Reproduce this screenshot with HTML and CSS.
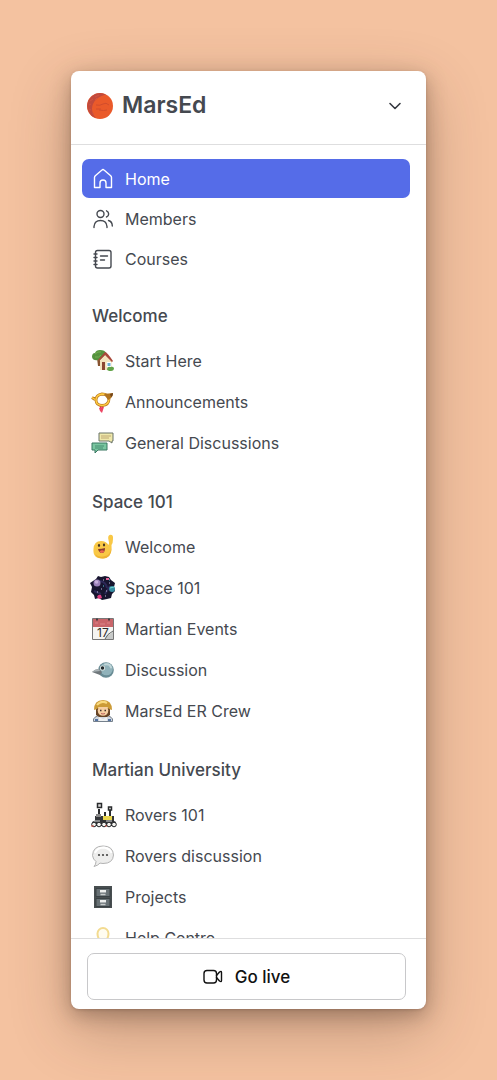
FILE: index.html
```html
<!DOCTYPE html>
<html lang="en">
<head>
    <meta charset="UTF-8">
    <meta name="viewport" content="width=device-width, initial-scale=1.0">
    <title>MarsEd</title>
    <link rel="stylesheet" href="styles.css">
</head>
<body>

<aside class="sidebar">
    <header class="sidebar-header">
        <svg class="logo" viewBox="0 0 26 26" aria-hidden="true">
            <circle cx="13" cy="13" r="13" fill="#ea5a2a"/>
            <path d="M13 0A13 13 0 0 0 9 25.300Q3 18 6 11T19 1.500Q16 0 13 0z" fill="#c24a3c"/>
            <path d="M3 8l3-2M2 12l2-1M8 4l4-2M2 16l2 1M8 7l2-2M5 20l2 1" stroke="#d2533f" stroke-width="1" fill="none"/>
            <path d="M9 12q4 1 7-1t6 1M9 16h5M12 17q5 1 8 0" stroke="#d24d2c" stroke-width="1" fill="none"/>
        </svg>
        <h1>MarsEd</h1>
        <button class="menu-btn" aria-label="Switch community">
            <svg class="chevron" viewBox="0 0 14 14"><path d="M2 4.500l5 5 5-5"/></svg>
        </button>
    </header>

    <nav class="nav">
        <div class="main-links">
            <a class="nav-link active" href="#">
                <svg class="icon line" viewBox="0 0 22 22"><path d="M2.500 9.500Q2.500 8.500 3.300 7.700L9.700 2.200Q11 1 12.300 2.200L18.700 7.700Q19.500 8.500 19.500 9.500V19.500H14V15Q14 12 11 12T8 15V19.500H2.500z"/></svg>
                Home
            </a>
            <a class="nav-link" href="#">
                <svg class="icon line" viewBox="0 0 22 22"><circle cx="8.500" cy="6" r="3.500"/><path d="M2 19.500V18.500Q2.500 12.500 8.500 12.500T15 18.500V19.500M14.500 2.800A3.300 3.300 0 0 1 14.500 9M16.500 12.500Q20.300 13.500 20.300 18"/></svg>
                Members
            </a>
            <a class="nav-link" href="#">
                <svg class="icon line" viewBox="0 0 22 22"><rect x="3.500" y="2.500" width="15.500" height="17.500" rx="2"/><path d="M8.500 8h7M8.500 12h4M2 6h3M2 9.500h3M2 13h3M2 16.500h3"/></svg>
                Courses
            </a>
        </div>

        <section class="group">
            <h2>Welcome</h2>
            <div class="group-links">
                <a class="nav-link" href="#">
                    <svg class="icon" viewBox="0 0 22 22">
                        <path d="M5 8h3v8H6z" fill="#875331"/>
                        <path d="M0 7Q0 3 3 3 4 0 8 0q5 0 6 3 2 4-2 5-3 4-6 2-5 1-6-3z" fill="#55933e"/>
                        <path d="M3 4q3-3 6-2M3 7q4 1 6-2" stroke="#75ae51" fill="none"/>
                        <path d="M8 10l6-6 6 7v9H8z" fill="#f4e3bd"/>
                        <path d="M6 10l7-8q2 0 8 9l-1 1-7-7-6 6z" fill="#a9483a"/>
                        <path d="M10 12h3v8h-3z" fill="#8c4631"/>
                        <path d="M15 12.500h4v4h-4z" fill="#6dadd0" stroke="#fff"/>
                        <path d="M15 19q1-3 3-2 3-1 4 1 0 3-3 3-4 0-4-2z" fill="#62a348"/>
                    </svg>
                    Start Here
                </a>
                <a class="nav-link" href="#">
                    <svg class="icon" viewBox="0 0 22 22" fill="none">
                        <path d="M8 13l1 6M11 13l-1 6" stroke="#e52b50" stroke-width="1.500"/>
                        <path d="M7 17l5-1-2 6-2-2z" fill="#ed4765"/>
                        <path d="M0 6.500l3 2M2.500 7.500h2M4 9q0-5 6-6 6 0 7 5 0 6-7 6.500Q4 14 4 9" stroke="#bb761c" stroke-width="2.800"/>
                        <path d="M0 6.500l3 2M4 9q0-5 6-6 6 0 7 5 0 6-7 6.500Q4 14 4 9" stroke="#ffcd42" stroke-width="1.400"/>
                        <path d="M12 3l9-1q0 5-5 7z" fill="#b1731e"/>
                        <path d="M18 3l3-1q0 3-2 4z" fill="#70441a"/>
                    </svg>
                    Announcements
                </a>
                <a class="nav-link" href="#">
                    <svg class="icon" viewBox="0 0 22 22">
                        <path d="M7 1h14v8h-1v2l-3-2H7z" fill="#efe8aa" stroke="#6b7568"/>
                        <path d="M9 4h10M9 6h8" stroke="#bfa875"/>
                        <path d="M0 11h15v7H6l-3 3v-3H0z" fill="#79c6a0" stroke="#397661"/>
                        <path d="M3 14h9M3 16h8" stroke="#468d70"/>
                    </svg>
                    General Discussions
                </a>
            </div>
        </section>

        <section class="group">
            <h2>Space 101</h2>
            <div class="group-links">
                <a class="nav-link" href="#">
                    <svg class="icon" viewBox="0 0 22 22">
                        <path d="M1.500 13Q2 5 9 5q5 0 7.500 4 1-2 0-5-1-4 1-5 4-1 3.500 4 0 4-1.500 6 1 13-9 13.500-10 0-9-9.500z" fill="#f9c846"/>
                        <path d="M3 18q4 4 10 2 5-1 6.500-8 0 10-8.500 10.500-6 0-8-4.500z" fill="#eeb235"/>
                        <ellipse cx="7" cy="9.500" rx="1.100" ry="1.400" fill="#453525"/><ellipse cx="12" cy="9" rx="1.100" ry="1.400" fill="#453525"/>
                        <path d="M6 13q4 0 7-1 0 5-3 5-3 0-4-4z" fill="#8a3a2c"/><path d="M7.500 15.500q2-2 5-.5-1 2-3 2z" fill="#ed6453"/>
                    </svg>
                    Welcome
                </a>
                <a class="nav-link" href="#">
                    <svg class="icon" viewBox="0 0 22 22">
                        <path d="M4 2l2-3 3 1 4-1 4 1 2 3 4 3-1 4 1 4-3 3-1 4-4 1-5 1-3-2-4 1-1-4-3-3 1-5-2-4z" fill="#17152f"/>
                        <path d="M2 14l7 3M8 4q6 1 7 7M13 17l5-8" stroke="#2c2856" stroke-width="2" fill="none"/>
                        <circle cx="5" cy="6" r="3.500" fill="#9980b8"/><circle cx="4.500" cy="5" r="1.800" fill="#c5aedb"/>
                        <circle cx="20" cy="12" r="3" fill="#378ea3"/><path d="M18 11l4-1" stroke="#6fd4cf"/>
                        <path d="M5 20q1-3 4-2l1 3-3 1z" fill="#e13e80"/>
                        <path d="M11 3h1M17 6h1M9 12h1M14 14h1M13 19h1M5 15h1" stroke="#c9bde0"/>
                        <path d="M14 2h3" stroke="#e5679c" stroke-width="2"/><path d="M17 3h1M11 9h1" stroke="#55cce2"/>
                    </svg>
                    Space 101
                </a>
                <a class="nav-link" href="#">
                    <svg class="icon" viewBox="0 0 22 22">
                        <path d="M.5.5h21v21H.5z" fill="#f5f4f1" stroke="#777"/>
                        <path d="M1 1h20v8H1z" fill="#c9656a"/><path d="M3 5h3M8 6h5M15 5h3" stroke="#dc8688"/>
                        <path d="M4 1.500h2M16 1.500h2" stroke="#493c40" stroke-width="2"/>
                        <text x="5" y="19" class="date-number">17</text>
                        <path d="M13 21l2-4q4 0 6-4v8z" fill="#c7c9c8"/><path d="M13 21q2-5 8-8" fill="none" stroke="#626767"/>
                    </svg>
                    Martian Events
                </a>
                <a class="nav-link" href="#">
                    <svg class="icon" viewBox="0 0 22 22">
                        <circle cx="14" cy="11" r="7.800" fill="#688b94"/>
                        <circle cx="14.500" cy="10" r="6.300" fill="#90b2ba"/>
                        <path d="M13 5.500q5-1 6 3" stroke="#bfd5d8" stroke-width="2" stroke-linecap="round" fill="none"/>
                        <path d="M0 13q3-3 7-3l3 3-2 3z" fill="#6f777b"/><path d="M0 13q3-3 7-3l1 2z" fill="#a9b2b5"/>
                        <circle cx="10.500" cy="9" r="2.600" fill="#d9e1dd"/><circle cx="10.500" cy="9" r="1.700" fill="#20292d"/>
                    </svg>
                    Discussion
                </a>
                <a class="nav-link" href="#">
                    <svg class="icon" viewBox="0 0 22 22">
                        <path d="M1.500 21.500V19Q4 15 11 15t9.500 4v2.500z" fill="#d2d7dd" stroke="#75808c"/>
                        <path d="M4 8v7l3 2h8l3-2V8z" fill="#674426"/>
                        <circle cx="11" cy="10.500" r="5.300" fill="#f6cfa2"/>
                        <path d="M2 10Q2 0 11 0t9 10q-3 0-5-3H7q-2 3-5 3z" fill="#cc9b37"/>
                        <path d="M5 5q4-5 10-2" stroke="#f9da7e" stroke-width="2" fill="none"/>
                        <path d="M8 10.500h1.500M12.500 10.500H14" stroke="#3c3029" stroke-width="1.500"/><path d="M9 13.500q2 1 4 0" stroke="#be6460" fill="none"/>
                        <path d="M7 17l4 2 4-2v4H7z" fill="#eef1f2"/><path d="M3 20h3M16 20h3" stroke="#5473a3" stroke-width="2"/>
                    </svg>
                    MarsEd ER Crew
                </a>
            </div>
        </section>

        <section class="group">
            <h2>Martian University</h2>
            <div class="group-links">
                <a class="nav-link" href="#">
                    <svg class="icon" viewBox="0 0 22 22">
                        <path d="M7 5v8M18 4v9M13 8v5" stroke="#292b2d" stroke-width="2"/>
                        <path d="M5.500-.5h4v4h-4zM16.500 3h3v3h-3z" stroke="#292b2d" stroke-width="1.500" fill="#ddd"/>
                        <path d="M3 12h19v5H3z" fill="#34373a"/><path d="M4 10h5v3H4z" fill="#888"/>
                        <path d="M11 12h9v4h-9z" fill="#e9d54d"/>
                        <path d="M0 18l4-2h16l4 2-1 4H0z" fill="#303235"/>
                        <g fill="#f3f3ef" stroke="#202225" stroke-width="1"><circle cx="2" cy="20.500" r="2.300"/><circle cx="7" cy="20.500" r="2.300"/><circle cx="12" cy="20.500" r="2.300"/><circle cx="17" cy="20.500" r="2.300"/><circle cx="22" cy="20.500" r="2.300"/></g>
                        <path d="M-1 22h3M13 22h2" stroke="#d44e3e"/><path d="M2 17h6M14 17h6" stroke="#ddd"/>
                    </svg>
                    Rovers 101
                </a>
                <a class="nav-link" href="#">
                    <svg class="icon" viewBox="0 0 22 22">
                        <path d="M11 1q10 0 10.500 9Q21 18.500 11 18.500l-3-.4Q6 20.500 2 21.500q2-2 2-5-3-2-3.500-6Q1 1 11 1z" fill="#ededec" stroke="#b3b3b3"/>
                        <path d="M3 8Q5 2.500 12 2.500q6 1 7.500 5.500" fill="none" stroke="#fff" stroke-width="2"/>
                        <g fill="#454545"><circle cx="7" cy="10" r="1.100"/><circle cx="11" cy="10" r="1.100"/><circle cx="15" cy="10" r="1.100"/></g>
                    </svg>
                    Rovers discussion
                </a>
                <a class="nav-link" href="#">
                    <svg class="icon" viewBox="0 0 22 22">
                        <path d="M2 0h18v22H2z" fill="#484e50"/>
                        <path d="M4 2.500h14v8H4zM4 12.500h14v8H4z" fill="#687175" stroke="#3a4245"/>
                        <path d="M8 4h6v2.500H8zM8 14h6v2.500H8z" fill="#eceeed"/><path d="M8.500 8.500h5M8.500 18.500h5" stroke="#c7cccb" stroke-width="1.500"/>
                    </svg>
                    Projects
                </a>
                <a class="nav-link" href="#">
                    <svg class="icon" viewBox="0 0 22 22">
                        <path d="M8 14Q5.500 10 5.500 6.500a5.500 5.500 0 0 1 11 0q0 3.500-2.500 7.500z" fill="#fffcf0" stroke="#f3db90" stroke-width="2"/>
                        <path d="M8 15h6v4q-3 3-6 0z" fill="#999"/>
                    </svg>
                    Help Centre
                </a>
            </div>
        </section>
    </nav>

    <footer class="sidebar-footer">
        <button class="live-btn">
            <svg class="camera line" viewBox="0 0 20 20"><rect x="1" y="3.500" width="12.500" height="12.500" rx="3"/><path d="M13.500 8.500l3-3.500q2-1.500 2 .5v8q0 2-2 .5l-3-3.500"/></svg>
            Go live
        </button>
    </footer>
</aside>

</body>
</html>
```
FILE: styles.css
```css
:root {
    --bg: #f4c2a0;
    --primary: #556ce8;
    --text: #454950;
    --border: #dededf;
}

* { box-sizing: border-box; }

body {
    font-family: Inter, 'Liberation Sans', sans-serif;
    background: var(--bg);
    color: var(--text);
    margin: 0;
    padding: 71px;
}

.sidebar {
    display: flex;
    flex-direction: column;
    height: calc(100vh - 142px);
    background: #fff;
    border-radius: 8px;
    overflow: hidden;
    box-shadow: 0 20px 60px rgba(70, 45, 35, 0.3), 0 6px 20px rgba(70, 45, 35, 0.35), 0 1px 3px rgba(70, 45, 35, 0.2);
}

/* Header */
.sidebar-header {
    display: flex;
    align-items: center;
    gap: 9px;
    padding: 16px 20px 20px 16px;
    border-bottom: 1px solid var(--border);
}

.logo { width: 26px; height: 26px; }

h1 {
    flex: 1;
    margin: 0;
    font-size: 23px;
    line-height: 37px;
    font-weight: 600;
}

.menu-btn {
    display: flex;
    border: none;
    background: none;
    padding: 4px;
    cursor: pointer;
}

.chevron {
    width: 14px;
    height: 14px;
    fill: none;
    stroke: #353940;
    stroke-width: 1.6;
    stroke-linecap: round;
    stroke-linejoin: round;
}

/* Links */
.nav {
    flex: 1;
    min-height: 0;
    overflow-y: auto;
    scrollbar-width: none;
    padding: 14px 16px 0 11px;
}

.main-links {
    display: flex;
    flex-direction: column;
    gap: 1px;
    margin-bottom: 26px;
}

.group { margin-bottom: 28px; }

h2 {
    margin: 0 0 13px;
    padding-left: 10px;
    font-size: 17px;
    line-height: 24px;
    font-weight: 500;
}

.group-links {
    display: flex;
    flex-direction: column;
    gap: 2px;
}

.nav-link {
    display: flex;
    align-items: center;
    gap: 11px;
    height: 39px;
    padding: 0 10px;
    border-radius: 7px;
    color: var(--text);
    font-size: 16px;
    text-decoration: none;
}

.nav-link.active { background: var(--primary); color: #fff; }

.icon { width: 22px; height: 22px; overflow: visible; }

.line {
    fill: none;
    stroke: currentColor;
    stroke-width: 1.4;
    stroke-linecap: round;
    stroke-linejoin: round;
}

.date-number { font-size: 12px; fill: #292929; }

/* Footer */
.sidebar-footer {
    padding: 14px 20px 9px 16px;
    border-top: 1px solid var(--border);
}

.live-btn {
    display: flex;
    align-items: center;
    justify-content: center;
    gap: 12px;
    width: 100%;
    height: 47px;
    border: 1px solid #c8c8ca;
    border-radius: 7px;
    background: #fff;
    color: #111;
    font-family: inherit;
    font-size: 17px;
    font-weight: 500;
    cursor: pointer;
}

.camera { width: 20px; height: 20px; }
```
